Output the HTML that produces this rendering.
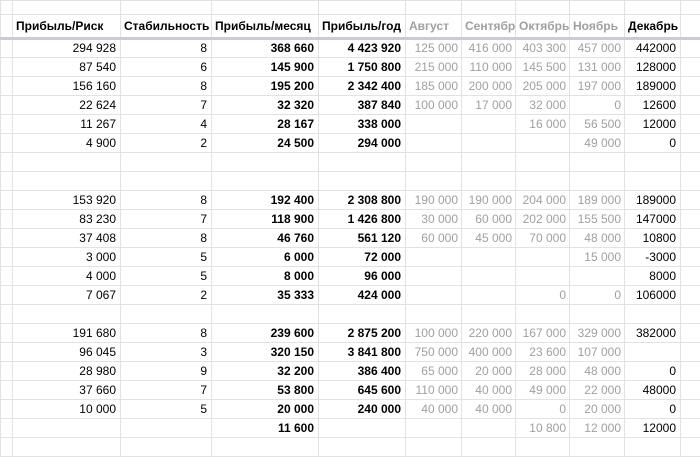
<!DOCTYPE html>
<html><head><style>
body{margin:0;width:700px;height:453px;overflow:hidden;background:#fff;font-family:"Liberation Sans",Arial,sans-serif;font-size:12px}
table{border-collapse:collapse;table-layout:fixed;position:absolute;left:0;top:0;width:702px;font-size:12px}
tr{height:19px}
td{border:1px solid #e2e2e2;padding:0 4px 0 2px;line-height:17px;font-size:12px;text-align:right;white-space:nowrap;overflow:hidden;color:#000}
tr.top{height:14px}
tr.top td{line-height:12px}
tr.h{height:24px}
tr.h td{line-height:21px;font-weight:bold;text-align:left;border-bottom:3px solid #c9ccd6;padding-left:3px;padding-right:0;font-size:12px}
tr.h td.g{color:#a0a0a0;padding-left:3px}
td.b{font-weight:bold}
td.g{color:#a0a0a0;padding-right:3px}
</style></head><body>
<table>
<colgroup><col style="width:12px"><col style="width:108px"><col style="width:91px"><col style="width:107px"><col style="width:87px"><col style="width:56px"><col style="width:54px"><col style="width:54px"><col style="width:55px"><col style="width:56px"><col style="width:22px"></colgroup>
<tr class="top"><td></td><td></td><td></td><td></td><td></td><td></td><td></td><td></td><td></td><td></td><td></td></tr>
<tr class="h"><td></td><td>Прибыль/Риск</td><td>Стабильность</td><td>Прибыль/месяц</td><td>Прибыль/год</td><td class="g">Август</td><td class="g">Сентябр</td><td class="g">Октябрь</td><td class="g">Ноябрь</td><td>Декабрь</td><td></td></tr>
<tr><td></td><td>294 928</td><td>8</td><td class="b">368 660</td><td class="b">4 423 920</td><td class="g">125 000</td><td class="g">416 000</td><td class="g">403 300</td><td class="g">457 000</td><td>442000</td><td></td></tr>
<tr><td></td><td>87 540</td><td>6</td><td class="b">145 900</td><td class="b">1 750 800</td><td class="g">215 000</td><td class="g">110 000</td><td class="g">145 500</td><td class="g">131 000</td><td>128000</td><td></td></tr>
<tr><td></td><td>156 160</td><td>8</td><td class="b">195 200</td><td class="b">2 342 400</td><td class="g">185 000</td><td class="g">200 000</td><td class="g">205 000</td><td class="g">197 000</td><td>189000</td><td></td></tr>
<tr><td></td><td>22 624</td><td>7</td><td class="b">32 320</td><td class="b">387 840</td><td class="g">100 000</td><td class="g">17 000</td><td class="g">32 000</td><td class="g">0</td><td>12600</td><td></td></tr>
<tr><td></td><td>11 267</td><td>4</td><td class="b">28 167</td><td class="b">338 000</td><td></td><td></td><td class="g">16 000</td><td class="g">56 500</td><td>12000</td><td></td></tr>
<tr><td></td><td>4 900</td><td>2</td><td class="b">24 500</td><td class="b">294 000</td><td></td><td></td><td></td><td class="g">49 000</td><td>0</td><td></td></tr>
<tr><td></td><td></td><td></td><td></td><td></td><td></td><td></td><td></td><td></td><td></td><td></td></tr>
<tr><td></td><td></td><td></td><td></td><td></td><td></td><td></td><td></td><td></td><td></td><td></td></tr>
<tr><td></td><td>153 920</td><td>8</td><td class="b">192 400</td><td class="b">2 308 800</td><td class="g">190 000</td><td class="g">190 000</td><td class="g">204 000</td><td class="g">189 000</td><td>189000</td><td></td></tr>
<tr><td></td><td>83 230</td><td>7</td><td class="b">118 900</td><td class="b">1 426 800</td><td class="g">30 000</td><td class="g">60 000</td><td class="g">202 000</td><td class="g">155 500</td><td>147000</td><td></td></tr>
<tr><td></td><td>37 408</td><td>8</td><td class="b">46 760</td><td class="b">561 120</td><td class="g">60 000</td><td class="g">45 000</td><td class="g">70 000</td><td class="g">48 000</td><td>10800</td><td></td></tr>
<tr><td></td><td>3 000</td><td>5</td><td class="b">6 000</td><td class="b">72 000</td><td></td><td></td><td></td><td class="g">15 000</td><td>-3000</td><td></td></tr>
<tr><td></td><td>4 000</td><td>5</td><td class="b">8 000</td><td class="b">96 000</td><td></td><td></td><td></td><td></td><td>8000</td><td></td></tr>
<tr><td></td><td>7 067</td><td>2</td><td class="b">35 333</td><td class="b">424 000</td><td></td><td></td><td class="g">0</td><td class="g">0</td><td>106000</td><td></td></tr>
<tr><td></td><td></td><td></td><td></td><td></td><td></td><td></td><td></td><td></td><td></td><td></td></tr>
<tr><td></td><td>191 680</td><td>8</td><td class="b">239 600</td><td class="b">2 875 200</td><td class="g">100 000</td><td class="g">220 000</td><td class="g">167 000</td><td class="g">329 000</td><td>382000</td><td></td></tr>
<tr><td></td><td>96 045</td><td>3</td><td class="b">320 150</td><td class="b">3 841 800</td><td class="g">750 000</td><td class="g">400 000</td><td class="g">23 600</td><td class="g">107 000</td><td></td><td></td></tr>
<tr><td></td><td>28 980</td><td>9</td><td class="b">32 200</td><td class="b">386 400</td><td class="g">65 000</td><td class="g">20 000</td><td class="g">28 000</td><td class="g">48 000</td><td>0</td><td></td></tr>
<tr><td></td><td>37 660</td><td>7</td><td class="b">53 800</td><td class="b">645 600</td><td class="g">110 000</td><td class="g">40 000</td><td class="g">49 000</td><td class="g">22 000</td><td>48000</td><td></td></tr>
<tr><td></td><td>10 000</td><td>5</td><td class="b">20 000</td><td class="b">240 000</td><td class="g">40 000</td><td class="g">40 000</td><td class="g">0</td><td class="g">20 000</td><td>0</td><td></td></tr>
<tr><td></td><td></td><td></td><td class="b">11 600</td><td></td><td></td><td></td><td class="g">10 800</td><td class="g">12 000</td><td>12000</td><td></td></tr>
<tr><td></td><td></td><td></td><td></td><td></td><td></td><td></td><td></td><td></td><td></td><td></td></tr>
</table>
</body></html>
